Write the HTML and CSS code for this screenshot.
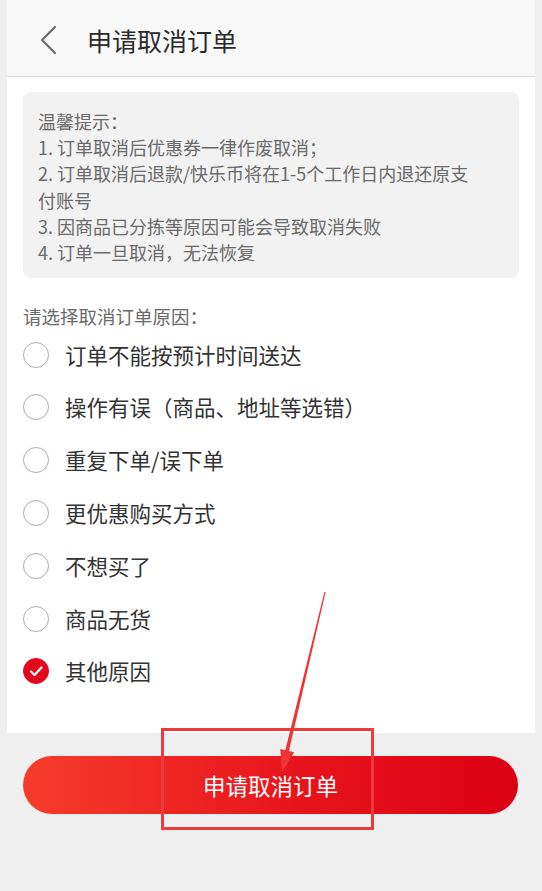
FILE: index.html
```html
<!DOCTYPE html>
<html lang="zh-CN">
<head>
<meta charset="utf-8">
<title>申请取消订单</title>
<link rel="stylesheet" href="styles.css">
</head>
<body>
<div class="page">
  <header class="header">
    <svg class="back" width="20" height="30" viewBox="0 0 20 30"><path d="M17 2 L4 15 L17 28" fill="none" stroke="#6a6a6a" stroke-width="2.2" stroke-linecap="round" stroke-linejoin="round"/></svg>
    <h1 class="title">申请取消订单</h1>
  </header>
  <main class="card">
    <div class="notice">
      <p>温馨提示：</p>
      <p>1. 订单取消后优惠券一律作废取消；</p>
      <p>2. 订单取消后退款/快乐币将在1-5个工作日内退还原支付账号</p>
      <p>3. 因商品已分拣等原因可能会导致取消失败</p>
      <p>4. 订单一旦取消，无法恢复</p>
    </div>
    <p class="label">请选择取消订单原因：</p>
    <ul class="options">
      <li class="option"><span class="radio"></span><span class="text">订单不能按预计时间送达</span></li>
      <li class="option"><span class="radio"></span><span class="text">操作有误（商品、地址等选错）</span></li>
      <li class="option"><span class="radio"></span><span class="text">重复下单/误下单</span></li>
      <li class="option"><span class="radio"></span><span class="text">更优惠购买方式</span></li>
      <li class="option"><span class="radio"></span><span class="text">不想买了</span></li>
      <li class="option"><span class="radio"></span><span class="text">商品无货</span></li>
      <li class="option"><span class="radio checked"><svg width="26" height="26" viewBox="0 0 26 26"><path d="M8 13.5 L11.5 17 L18.5 9.5" fill="none" stroke="#fff" stroke-width="2.2" stroke-linecap="round" stroke-linejoin="round"/></svg></span><span class="text">其他原因</span></li>
    </ul>
  </main>
  <button class="submit">申请取消订单</button>
</div>
<div class="annot-box"></div>
<svg class="annot-arrow" width="542" height="891" viewBox="0 0 542 891"><polygon points="324.4,591.9 325.6,592.1 288.9,751.0 294.2,752.3 282,772 280.2,748.9 285.3,750.2" fill="#ee3535"/></svg>
</body>
</html>
```

FILE: styles.css
```css
* { box-sizing: border-box; }
html, body { margin: 0; padding: 0; }
body {
  background: #efefef;
  font-family: "Noto Sans CJK SC", "Noto Sans", sans-serif;
  width: 542px;
  height: 891px;
  position: relative;
  overflow: hidden;
}
.page {
  margin: 0 7px;
}
.header {
  height: 77px;
  background: #f8f8f8;
  border-bottom: 1px solid #dedede;
  display: flex;
  align-items: center;
  padding-left: 31px;
  padding-top: 4px;
}
.back { display: block; }
.title {
  margin: 0 0 0 29px;
  font-size: 25px;
  font-weight: normal;
  color: #2a2a2a;
  line-height: 30px;
}
.card {
  background: #fff;
  padding: 15px 16px 35px;
  display: block;
}
.notice {
  background: #f2f2f2;
  border-radius: 8px;
  padding: 16px 38px 13px 15px;
  color: #6a6a6a;
  font-size: 18px;
  line-height: 26.2px;
}
.notice p { margin: 0; }
.label {
  margin: 26px 0 0;
  font-size: 18.5px;
  line-height: 24px;
  color: #6a6a6a;
}
.options {
  list-style: none;
  margin: 0;
  padding: 0;
}
.option {
  height: 52.8px;
  display: flex;
  align-items: center;
}
.radio {
  width: 26px;
  height: 26px;
  border-radius: 50%;
  border: 1.8px solid #ababab;
  flex: none;
  margin-right: 16px;
  display: flex;
  align-items: center;
  justify-content: center;
}
.radio.checked {
  background: #e2071c;
  border-color: #e2071c;
}
.radio.checked svg { flex: none; }
.text {
  font-size: 21.5px;
  color: #333;
  line-height: 30px;
}
.submit {
  display: block;
  width: 495px;
  height: 58px;
  margin: 23px 0 0 16px;
  border: none;
  border-radius: 29px;
  background: linear-gradient(90deg, #f63c2c 0%, #e8141c 55%, #dc0013 100%);
  color: #fff;
  font-family: "Noto Sans CJK SC", "Noto Sans", sans-serif;
  font-size: 22.5px;
  padding: 0;
  line-height: 58px;
}
.annot-box {
  position: absolute;
  left: 161px;
  top: 728px;
  width: 213px;
  height: 102px;
  border: 3px solid #ec3b3b;
}
.annot-arrow {
  position: absolute;
  left: 0;
  top: 0;
  pointer-events: none;
}
```
